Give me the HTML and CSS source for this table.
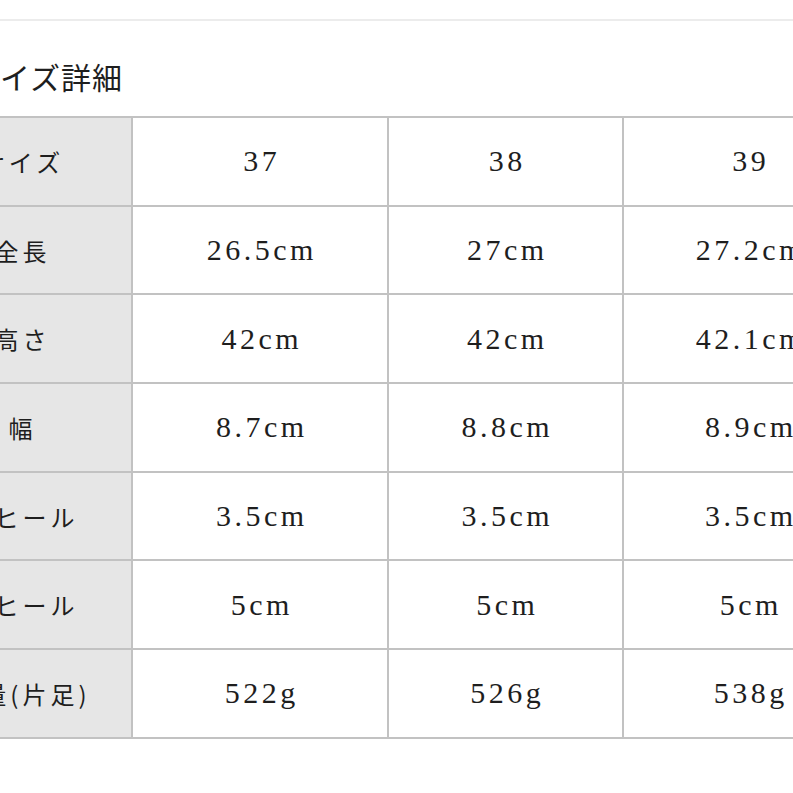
FILE: index.html
```html
<!DOCTYPE html>
<html lang="ja">
<head>
<meta charset="utf-8">
<title>サイズ詳細</title>
<link rel="stylesheet" href="styles.css">
</head>
<body>
<div class="page">
  <div class="rule"></div>
  <h2 class="title">サイズ詳細</h2>
  <table class="sizes">
    <colgroup>
      <col class="c-head">
      <col class="c2">
      <col class="c3">
      <col class="c4">
    </colgroup>
    <tbody>
      <tr><th>サイズ</th><td>37</td><td>38</td><td>39</td></tr>
      <tr><th>全長</th><td>26.5cm</td><td>27cm</td><td>27.2cm</td></tr>
      <tr><th>高さ</th><td>42cm</td><td>42cm</td><td>42.1cm</td></tr>
      <tr><th>幅</th><td>8.7cm</td><td>8.8cm</td><td>8.9cm</td></tr>
      <tr><th>前ヒール</th><td>3.5cm</td><td>3.5cm</td><td>3.5cm</td></tr>
      <tr><th>後ヒール</th><td>5cm</td><td>5cm</td><td>5cm</td></tr>
      <tr><th>重量(片足)</th><td>522g</td><td>526g</td><td>538g</td></tr>
    </tbody>
  </table>
</div>
</body>
</html>
```

FILE: styles.css
```css
html, body {
  margin: 0;
  padding: 0;
  background: #ffffff;
  overflow: hidden;
}

.page {
  margin-left: -92px;
  width: 1000px;
  color: #222222;
}

.rule {
  margin-top: 19px;
  margin-left: 92px;
  height: 2px;
  background: #ececec;
}

.title {
  margin: 35px 0 0 0;
  padding-left: 61px;
  height: 40px;
  line-height: 40px;
  font-family: "Noto Sans CJK JP", sans-serif;
  font-weight: 400;
  font-size: 30px;
  letter-spacing: 1px;
  color: #1e1e1e;
}

.sizes {
  margin-top: 20px;
  border-collapse: separate;
  border-spacing: 2px;
  background: #c2c2c2;
  table-layout: fixed;
  width: 968px;
}

.c-head { width: 221px; }
.c2 { width: 254px; }
.c3 { width: 233px; }
.c4 { width: 250px; }

.sizes th,
.sizes td {
  height: 86.7px;
  padding: 0;
  text-align: center;
  vertical-align: middle;
}

.sizes th {
  background: #e6e6e6;
  font-family: "Noto Sans CJK JP", sans-serif;
  font-weight: 400;
  font-size: 24px;
  letter-spacing: 4px;
  padding-left: 4px;
  color: #1e1e1e;
}

.sizes td {
  background: #ffffff;
  font-family: "Liberation Serif", "Noto Sans CJK JP", serif;
  font-size: 30px;
  letter-spacing: 3.5px;
  padding-left: 3.5px;
  color: #1e1e1e;
}
```
